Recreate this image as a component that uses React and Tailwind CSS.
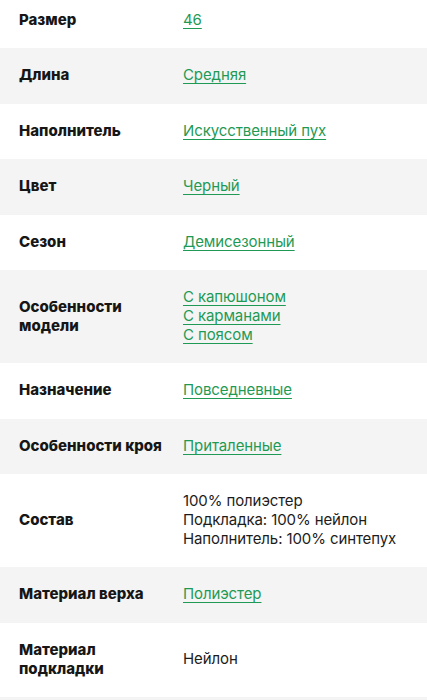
import React from "react";

const rows = [
  { label: "Размер", links: ["46"] },
  { label: "Длина", links: ["Средняя"] },
  { label: "Наполнитель", links: ["Искусственный пух"] },
  { label: "Цвет", links: ["Черный"] },
  { label: "Сезон", links: ["Демисезонный"] },
  { label: "Особенности модели", links: ["С капюшоном", "С карманами", "С поясом"] },
  { label: "Назначение", links: ["Повседневные"] },
  { label: "Особенности кроя", links: ["Приталенные"] },
  { label: "Состав", text: ["100% полиэстер", "Подкладка: 100% нейлон", "Наполнитель: 100% синтепух"] },
  { label: "Материал верха", links: ["Полиэстер"] },
  { label: "Материал подкладки", text: ["Нейлон"] },
];

export default function App() {
  return (
    <div
      className="w-[427px] h-[700px] overflow-hidden bg-white text-[15px] leading-[18.75px] text-[#1c1c1c]"
      style={{ fontFamily: "Inter, 'Noto Sans', sans-serif" }}
    >
      <div className="mt-[-7.5px]">
        {rows.map((r, i) => (
          <div
            key={i}
            className={`grid grid-cols-[164px_1fr] items-center pl-[19px] pr-4 py-[18.375px] ${
              i % 2 === 1 ? "bg-[#f4f4f4]" : "bg-white"
            }`}
          >
            <div className="font-extrabold pr-2 text-[#161616]">{r.label}</div>
            <div className="flex flex-col items-start tracking-[-0.1px]">
              {r.links
                ? r.links.map((l, j) => (
                    <a
                      key={j}
                      className="text-[#1f9a55] underline decoration-[#1f9a55] decoration-1 underline-offset-[3px]"
                    >
                      {l}
                    </a>
                  ))
                : r.text.map((t, j) => <span key={j}>{t}</span>)}
            </div>
          </div>
        ))}
        <div className="h-10 bg-[#f4f4f4]" />
      </div>
    </div>
  );
}
